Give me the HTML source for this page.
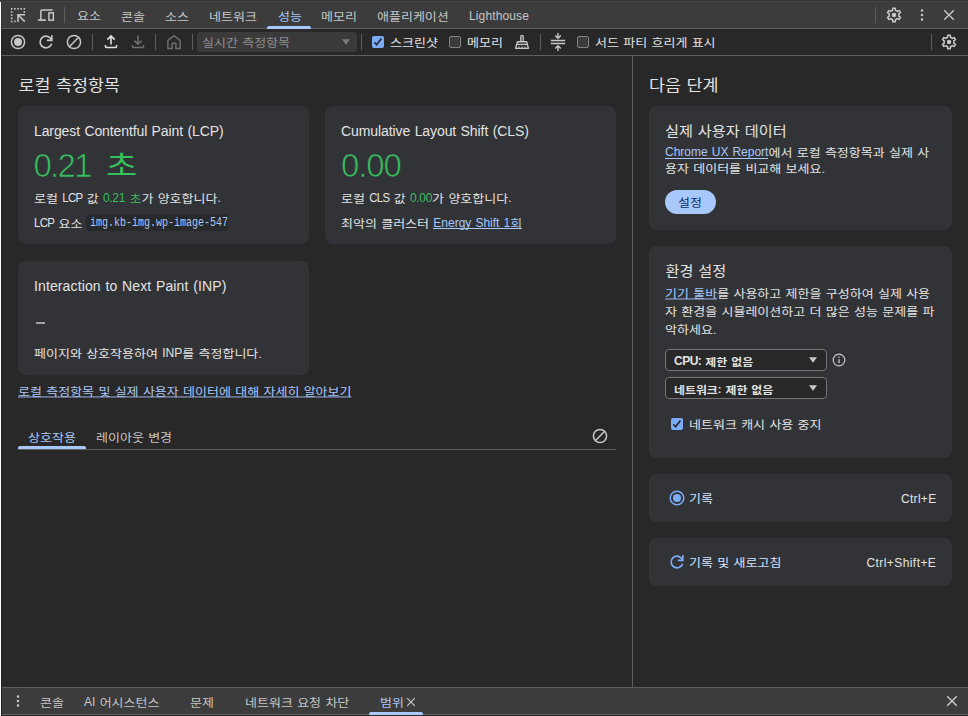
<!DOCTYPE html>
<html lang="ko">
<head>
<meta charset="utf-8">
<title>DevTools</title>
<style>
*{box-sizing:border-box;margin:0;padding:0}
html,body{width:968px;height:716px;overflow:hidden;background:#282828}
body{position:relative;font-family:"Liberation Sans","Noto Sans CJK KR",sans-serif;font-size:13px;color:#e3e3e3;line-height:16px;-webkit-font-smoothing:antialiased}
.abs,.t{position:absolute}
.t{white-space:nowrap;line-height:16px;height:16px;word-spacing:0.7px}
.l{font-size:12px}
.u{font-size:11.5px;letter-spacing:-0.75px}
.n{font-size:12px;letter-spacing:-0.3px}
.sub{color:#c7c7c7}
.pri{color:#a8c7fa}
.grn{color:#37be5f}
.dim{color:#8f8f8f}
a{color:#a8c7fa;text-decoration:underline;text-underline-offset:1px}
.k{transform:translateY(0.6px) scaleY(0.89);transform-origin:0 12.2px}
.kh{transform:scaleY(0.9);transform-origin:0 17px}
.kt{transform:scaleY(0.9);transform-origin:0 14.3px}
.k .l,.k .u,.k .n,.k .b{display:inline-block;transform:translateY(-0.68px) scaleY(1.1236);transform-origin:0 12.2px}
.k .u{transform:translateY(-0.68px) scaleY(1.2)}
a.x{text-decoration:none}
.hline{position:absolute;height:1px;background:#5e5e5e}
.vline{position:absolute;width:1px;background:#5e5e5e}
.card{position:absolute;background:#323337;border-radius:8px}
svg{position:absolute;overflow:visible}
.cb{position:absolute;width:12px;height:12px;border-radius:2px}
.cb.off{border:1px solid #858585;background:#3b3b3b}
.cb.on{background:#7cacf8}
.sel{position:absolute;border:1px solid #757575;border-radius:4px;background:#282828}
</style>
</head>
<body>
<!-- top edge + tab bar -->
<div class="abs" style="left:0;top:0;width:968px;height:1px;background:#343434"></div>
<div class="abs" style="left:0;top:1px;width:968px;height:1px;background:#464646"></div>
<div class="abs" id="tabbar" style="left:0;top:2px;width:968px;height:26px;background:#3c3c3c"></div>
<div class="hline" style="left:0;top:28px;width:968px"></div>
<div class="hline" style="left:0;top:55px;width:968px"></div>
<!-- left white edge -->
<div class="abs" style="left:0;top:2px;width:1px;height:714px;background:#fff"></div>
<div class="abs" style="left:1px;top:2px;width:1px;height:714px;background:rgba(0,0,0,0.14);z-index:5"></div>

<!-- tab labels -->
<div class="t k sub" id="tab1" style="left:77px;top:7.4px">요소</div>
<div class="t k sub" id="tab2" style="left:121px;top:8px">콘솔</div>
<div class="t k sub" id="tab3" style="left:165px;top:8px">소스</div>
<div class="t k sub" id="tab4" style="left:209px;top:8px">네트워크</div>
<div class="t k pri" id="tab5" style="left:278px;top:8px">성능</div>
<div class="t k sub" id="tab6" style="left:321px;top:8px">메모리</div>
<div class="t k sub" id="tab7" style="left:377px;top:8px">애플리케이션</div>
<div class="t sub l" id="tab8" style="left:469px;top:8px;letter-spacing:0.13px">Lighthouse</div>
<div class="abs" style="left:267px;top:26px;width:44px;height:3px;background:#a8c7fa;border-radius:2px 2px 0 0"></div>
<div class="vline" style="left:64px;top:7px;height:16px"></div>
<div class="vline" style="left:875px;top:7px;height:16px"></div>

<!-- perf toolbar -->
<div class="vline" style="left:92px;top:34px;height:16px"></div>
<div class="vline" style="left:155px;top:34px;height:16px"></div>
<div class="vline" style="left:192px;top:34px;height:16px"></div>
<div class="vline" style="left:361px;top:34px;height:16px"></div>
<div class="vline" style="left:540px;top:34px;height:16px"></div>
<div class="vline" style="left:931px;top:34px;height:16px"></div>
<div class="abs" style="left:197px;top:32px;width:160px;height:20px;background:#3a3a3a;border-radius:4px"></div>
<div class="t k dim" id="selt" style="left:202px;top:34px">실시간 측정항목</div>
<div class="t k" id="cb1t" style="left:390px;top:34px">스크린샷</div>
<div class="cb off" style="left:449px;top:36px"></div>
<div class="t k" id="cb2t" style="left:467px;top:34px">메모리</div>
<div class="cb off" style="left:577px;top:36px"></div>
<div class="t k" id="cb3t" style="left:595px;top:34px">서드 파티 흐리게 표시</div>

<!-- main dividers -->
<div class="vline" style="left:632px;top:56px;height:631px"></div>

<!-- left column -->
<div class="t kh" id="h1" style="left:18.5px;top:74px;font-size:17.4px;line-height:22px;height:22px">로컬 측정항목</div>
<div class="card" style="left:18px;top:106px;width:290.5px;height:138px"></div>
<div class="card" style="left:325px;top:106px;width:291px;height:138px"></div>
<div class="card" style="left:18px;top:261px;width:290.5px;height:114px"></div>

<!-- right column -->
<div class="t kh" id="h2" style="left:649px;top:74px;font-size:17.4px;line-height:22px;height:22px">다음 단계</div>
<div class="card" style="left:649px;top:106px;width:303px;height:124px"></div>
<div class="card" style="left:649px;top:246px;width:303px;height:212px"></div>
<div class="card" style="left:649px;top:474px;width:303px;height:48px"></div>
<div class="card" style="left:649px;top:538px;width:303px;height:48px"></div>


<!-- drawer -->
<div class="hline" style="left:2px;top:687px;width:966px"></div>
<div class="abs" style="left:2px;top:688px;width:966px;height:26px;background:#3c3c3c"></div>
<div class="hline" style="left:2px;top:714px;width:966px"></div>

<!-- left column text -->
<div class="t" id="lcp_t" style="left:34px;top:123px;font-size:14px;letter-spacing:-0.11px">Largest Contentful Paint (LCP)</div>
<div class="t grn" id="lcp_v" style="left:33.5px;top:146.5px;font-size:33px;line-height:38px;height:38px;letter-spacing:-1.75px;-webkit-text-stroke:0.7px #323337"><span id="lcp_vn">0.21</span></div>
<div class="t grn" id="lcp_vk" style="left:106px;top:145px;font-size:34px;line-height:38px;height:38px;transform:scaleY(0.82);transform-origin:0 31px">초</div>
<div class="t k" id="lcp_d" style="left:34px;top:190px">로컬 <span class="u">LCP</span> 값 <span class="grn"><span class="n">0.21</span> 초</span>가 양호합니다<span class="u">.</span></div>
<div class="t k" id="lcp_e" style="left:34px;top:215px"><span class="u">LCP</span> 요소</div>
<div class="abs" style="left:86.3px;top:214.4px;width:141.8px;height:16.6px;background:#28292b;border-radius:3px"></div>
<div class="t pri" id="lcp_c" style="left:90px;top:215px;font-family:'Liberation Mono','Noto Sans CJK KR',monospace;font-size:13px;transform:scaleX(0.7692);transform-origin:0 50%">img.kb-img.wp-image-547</div>

<div class="t" id="cls_t" style="left:341px;top:123px;font-size:14px;letter-spacing:-0.09px">Cumulative Layout Shift (CLS)</div>
<div class="t grn" id="cls_v" style="left:341px;top:146.5px;font-size:33px;line-height:38px;height:38px;letter-spacing:-1.1px;-webkit-text-stroke:0.7px #323337">0.00</div>
<div class="t k" id="cls_d" style="left:341px;top:190px">로컬 <span class="u">CLS</span> 값 <span class="grn n">0.00</span>가 양호합니다<span class="u">.</span></div>
<div class="t k" id="cls_e" style="left:341px;top:215px">최악의 클러스터 <a class="x" id="cls_a"><span class="l">Energy Shift 1</span>회</a></div>

<div class="t" id="inp_t" style="left:34px;top:278px;font-size:14px;letter-spacing:0.12px">Interaction to Next Paint (INP)</div>
<div class="abs" style="left:36px;top:322px;width:9px;height:2px;background:#a3a3a3"></div>
<div class="t k" id="inp_d" style="left:34px;top:345px">페이지와 상호작용하여 <span class="l">INP</span>를 측정합니다.</div>
<a class="t k" id="more" style="left:18px;top:383.3px">로컬 측정항목 및 실제 사용자 데이터에 대해 자세히 알아보기</a>

<div class="t k pri" id="st1" style="left:28px;top:429px">상호작용</div>
<div class="t k sub" id="st2" style="left:96px;top:429px">레이아웃 변경</div>
<div class="hline" style="left:18px;top:449px;width:598px"></div>
<div class="abs" style="left:18px;top:446px;width:68px;height:3px;background:#a8c7fa;border-radius:2px 2px 0 0"></div>

<div class="abs" style="left:433px;top:228px;width:88.5px;height:1px;background:#a8c7fa"></div>
<div class="abs" style="left:665px;top:158px;width:103px;height:1px;background:#a8c7fa"></div>
<!-- right column text -->
<div class="t kt" id="r1_t" style="left:665px;top:122px;font-size:15.2px;line-height:18px;height:18px">실제 사용자 데이터</div>
<div class="t k" id="r1_l1" style="left:665px;top:143.8px"><a class="x" id="crux"><span class="l">Chrome UX Report</span></a>에서 로컬 측정항목과 실제 사</div>
<div class="t k" id="r1_l2" style="left:665px;top:159.8px">용자 데이터를 비교해 보세요.</div>
<div class="abs" style="left:665px;top:190px;width:50.5px;height:24px;border-radius:12px;background:#a8c7fa"></div>
<div class="t k" id="r1_b" style="left:678px;top:194px;color:#062e6f">설정</div>

<div class="t kt" id="r2_t" style="left:665.5px;top:262px;font-size:15.2px;line-height:18px;height:18px">환경 설정</div>
<div class="t k" id="r2_l1" style="left:665px;top:285.4px"><a>기기 툴바</a>를 사용하고 제한을 구성하여 실제 사용</div>
<div class="t k" id="r2_l2" style="left:665px;top:303px">자 환경을 시뮬레이션하고 더 많은 성능 문제를 파</div>
<div class="t k" id="r2_l3" style="left:665px;top:320.6px">악하세요.</div>
<div class="sel" style="left:665px;top:349px;width:162px;height:22px"></div>
<div class="sel" style="left:665px;top:377px;width:162px;height:22px"></div>
<div class="t k" id="r2_s1" style="left:674px;top:352.8px;font-weight:700;font-size:11.9px"><span class="b" style="font-size:12px;letter-spacing:-0.5px">CPU:</span> 제한 없음</div>
<div class="t k" id="r2_s2" style="left:674px;top:380.8px;font-weight:700;font-size:11.9px">네트워크<span class="b" style="font-size:11px">:</span> 제한 없음</div>
<div class="t k" id="r2_c" style="left:689px;top:416px">네트워크 캐시 사용 중지</div>

<div class="t k" id="r3_t" style="left:689px;top:490px;color:#d3e3fd">기록</div>
<div class="t l" id="r3_k" style="left:901px;top:491px;letter-spacing:0.3px">Ctrl+E</div>
<div class="t k" id="r4_t" style="left:689px;top:554px;color:#d3e3fd">기록 및 새로고침</div>
<div class="t l" id="r4_k" style="left:866.5px;top:555px;letter-spacing:0.42px">Ctrl+Shift+E</div>

<!-- drawer tabs -->
<div class="t k sub" id="d1" style="left:40px;top:694px">콘솔</div>
<div class="t k sub" id="d2" style="left:84px;top:694px"><span class="l">AI</span> 어시스턴스</div>
<div class="t k sub" id="d3" style="left:190px;top:694px">문제</div>
<div class="t k sub" id="d4" style="left:245px;top:694px">네트워크 요청 차단</div>
<div class="t k pri" id="d5" style="left:380px;top:694px">범위</div>
<div class="abs" style="left:369px;top:712px;width:54px;height:3px;background:#a8c7fa;border-radius:2px 2px 0 0"></div>

<!-- icons -->
<svg style="left:0;top:0" width="60" height="30" viewBox="0 0 60 30"><rect x="10.90" y="8.00" width="1.6" height="1.6" fill="#c7c7c7"/><rect x="14.05" y="8.00" width="1.6" height="1.6" fill="#c7c7c7"/><rect x="10.90" y="11.15" width="1.6" height="1.6" fill="#c7c7c7"/><rect x="17.20" y="8.00" width="1.6" height="1.6" fill="#c7c7c7"/><rect x="10.90" y="14.30" width="1.6" height="1.6" fill="#c7c7c7"/><rect x="20.35" y="8.00" width="1.6" height="1.6" fill="#c7c7c7"/><rect x="10.90" y="17.45" width="1.6" height="1.6" fill="#c7c7c7"/><rect x="23.50" y="8.00" width="1.6" height="1.6" fill="#c7c7c7"/><rect x="10.90" y="20.60" width="1.6" height="1.6" fill="#c7c7c7"/><rect x="23.50" y="11.15" width="1.6" height="1.6" fill="#c7c7c7"/><rect x="14.05" y="20.60" width="1.6" height="1.6" fill="#c7c7c7"/><path d="M25.1 14.8 H18 V21.9 M18.4 15.2 L24.8 21.6" fill="none" stroke="#c7c7c7" stroke-width="1.5"/><path d="M52.8 9.95 H42.2 Q40.85 9.95 40.85 11.3 V19.4" fill="none" stroke="#c7c7c7" stroke-width="1.5"/><path d="M38.1 20.1 H45.9" fill="none" stroke="#c7c7c7" stroke-width="1.7"/><rect x="48.95" y="12.85" width="4.4" height="7.3" fill="none" stroke="#c7c7c7" stroke-width="1.5"/></svg>
<svg style="left:885.0px;top:6.0px" width="18" height="18" viewBox="0 0 24 24"><path fill="#c7c7c7" d="M19.43 12.98c.04-.32.07-.64.07-.98 0-.34-.03-.66-.07-.98l2.11-1.65c.19-.15.24-.42.12-.64l-2-3.46c-.09-.16-.26-.25-.44-.25-.06 0-.12.01-.17.03l-2.49 1c-.52-.4-1.08-.73-1.69-.98l-.38-2.65C14.46 2.18 14.25 2 14 2h-4c-.25 0-.46.18-.49.42l-.38 2.65c-.61.25-1.17.59-1.69.98l-2.49-1c-.06-.02-.12-.03-.18-.03-.17 0-.34.09-.43.25l-2 3.46c-.13.22-.07.49.12.64l2.11 1.65c-.04.32-.07.65-.07.98 0 .33.03.66.07.98l-2.11 1.65c-.19.15-.24.42-.12.64l2 3.46c.09.16.26.25.44.25.06 0 .12-.01.17-.03l2.49-1c.52.4 1.08.73 1.69.98l.38 2.65c.03.24.24.42.49.42h4c.25 0 .46-.18.49-.42l.38-2.65c.61-.25 1.17-.59 1.69-.98l2.49 1c.06.02.12.03.18.03.17 0 .34-.09.43-.25l2-3.46c.12-.22.07-.49-.12-.64l-2.11-1.65zm-1.98-1.71c.04.31.05.52.05.73 0 .21-.02.43-.05.73l-.14 1.13.89.7 1.08.84-.7 1.21-1.27-.51-1.04-.42-.9.68c-.43.32-.84.56-1.25.73l-1.06.43-.16 1.13-.2 1.35h-1.4l-.19-1.35-.16-1.13-1.06-.43c-.43-.18-.83-.41-1.23-.71l-.91-.7-1.06.43-1.27.51-.7-1.21 1.08-.84.89-.7-.14-1.13c-.03-.31-.05-.54-.05-.74s.02-.43.05-.73l.14-1.13-.89-.7-1.08-.84.7-1.21 1.27.51 1.04.42.9-.68c.43-.32.84-.56 1.25-.73l1.06-.43.16-1.13.2-1.35h1.39l.19 1.35.16 1.13 1.06.43c.43.18.83.41 1.23.71l.91.7 1.06-.43 1.27-.51.7 1.21-1.07.85-.89.7.14 1.13z"/><circle cx="12" cy="12" r="3" fill="#c7c7c7"/></svg>
<svg style="left:918px;top:5px" width="8" height="20" viewBox="-4 -10 8 20"><circle cy="-4.4" r="1.25" fill="#c7c7c7"/><circle r="1.25" fill="#c7c7c7"/><circle cy="4.4" r="1.25" fill="#c7c7c7"/></svg>
<svg style="left:941px;top:7px" width="16" height="16" viewBox="-8 -8 16 16"><path d="M-4.8 -4.8 L4.8 4.8 M-4.8 4.8 L4.8 -4.8" stroke="#c7c7c7" stroke-width="1.4" fill="none"/></svg>
<svg style="left:8px;top:32px" width="20" height="20" viewBox="-10 -10 20 20"><circle r="6.6" fill="none" stroke="#c7c7c7" stroke-width="1.5"/><circle r="4.0" fill="#c7c7c7"/></svg>
<svg style="left:36.2px;top:32.1px" width="20" height="20" viewBox="0 -960 960 960"><path fill="#c7c7c7" d="M480-160q-134 0-227-93t-93-227q0-134 93-227t227-93q69 0 132 28.500T720-690v-110h80v280H520v-80h168q-32-56-87.500-88T480-720q-100 0-170 70t-70 170q0 100 70 170t170 70q77 0 139-44t87-116h84q-28 106-114 173t-196 67Z"/></svg>
<svg style="left:64px;top:32px" width="20" height="20" viewBox="-10 -10 20 20"><circle r="6.6" fill="none" stroke="#c7c7c7" stroke-width="1.5"/><path d="M-4.66686 4.66686 L4.66686 -4.66686" stroke="#c7c7c7" stroke-width="1.5"/></svg>
<svg style="left:101px;top:32px" width="20" height="20" viewBox="-10 -10 20 20"><path d="M0 2.6 V-5.6 M-3.6 -2.4 L0 -6 L3.6 -2.4" fill="none" stroke="#e3e3e3" stroke-width="1.6"/><path d="M-5.6 3 V4.2 Q-5.6 5.4 -4.4 5.4 H4.4 Q5.6 5.4 5.6 4.2 V3" fill="none" stroke="#e3e3e3" stroke-width="1.5"/></svg>
<svg style="left:128px;top:32px" width="20" height="20" viewBox="-10 -10 20 20"><path d="M0 -6.4 V1.8 M-3.6 -1.4 L0 2.2 L3.6 -1.4" fill="none" stroke="#6e6e6e" stroke-width="1.6"/><path d="M-5.6 3 V4.2 Q-5.6 5.4 -4.4 5.4 H4.4 Q5.6 5.4 5.6 4.2 V3" fill="none" stroke="#6e6e6e" stroke-width="1.5"/></svg>
<svg style="left:164px;top:32px" width="20" height="20" viewBox="-10 -10 20 20"><path d="M-6.1 6.5 V-1.6 L0 -6.3 L6.1 -1.6 V6.5 H1.9 V1.2 H-1.9 V6.5 Z" fill="none" stroke="#6e6e6e" stroke-width="1.5" stroke-linejoin="miter"/></svg>
<svg style="left:340px;top:36.3px" width="12" height="12" viewBox="-6 -6 12 12"><path d="M-4.0 -2.75 H4.0 L0 2.75 Z" fill="#7a7a7a"/></svg>
<svg style="left:372px;top:36px" width="12" height="12" viewBox="0 0 12 12"><rect width="12" height="12" rx="2" fill="#7cacf8"/><path d="M2.3 6.3 L4.6 8.8 L9.5 2.6" fill="none" stroke="#262626" stroke-width="1.6"/></svg>
<svg style="left:512px;top:32px" width="20" height="20" viewBox="-10 -10 20 20"><path d="M-1.2 -0.4 V-5.4 Q-1.2 -6.6 0 -6.6 Q1.2 -6.6 1.2 -5.4 V-0.4" fill="none" stroke="#c7c7c7" stroke-width="1.4"/><path d="M-4.6 -0.2 H4.6 L6.4 6.4 H-6.4 Z" fill="none" stroke="#c7c7c7" stroke-width="1.4" stroke-linejoin="round"/><path d="M-5.2 2.4 H5.2" stroke="#c7c7c7" stroke-width="1.3"/><path d="M-3 4.6 V6.4 M0 4.6 V6.4 M3 4.6 V6.4" stroke="#c7c7c7" stroke-width="1.2"/></svg>
<svg style="left:548px;top:30.700000000000003px" width="20" height="22" viewBox="-10 -11 20 22"><path d="M-7.2 -1.5 H7.2 M-7.2 1.5 H7.2" stroke="#c7c7c7" stroke-width="1.4"/><path d="M0 -9 V-4.2 M-2.8 -6.6 L0 -3.8 L2.8 -6.6" fill="none" stroke="#c7c7c7" stroke-width="1.4"/><path d="M0 9 V4.2 M-2.8 6.6 L0 3.8 L2.8 6.6" fill="none" stroke="#c7c7c7" stroke-width="1.4"/></svg>
<svg style="left:940.0px;top:33.0px" width="18" height="18" viewBox="0 0 24 24"><path fill="#c7c7c7" d="M19.43 12.98c.04-.32.07-.64.07-.98 0-.34-.03-.66-.07-.98l2.11-1.65c.19-.15.24-.42.12-.64l-2-3.46c-.09-.16-.26-.25-.44-.25-.06 0-.12.01-.17.03l-2.49 1c-.52-.4-1.08-.73-1.69-.98l-.38-2.65C14.46 2.18 14.25 2 14 2h-4c-.25 0-.46.18-.49.42l-.38 2.65c-.61.25-1.17.59-1.69.98l-2.49-1c-.06-.02-.12-.03-.18-.03-.17 0-.34.09-.43.25l-2 3.46c-.13.22-.07.49.12.64l2.11 1.65c-.04.32-.07.65-.07.98 0 .33.03.66.07.98l-2.11 1.65c-.19.15-.24.42-.12.64l2 3.46c.09.16.26.25.44.25.06 0 .12-.01.17-.03l2.49-1c.52.4 1.08.73 1.69.98l.38 2.65c.03.24.24.42.49.42h4c.25 0 .46-.18.49-.42l.38-2.65c.61-.25 1.17-.59 1.69-.98l2.49 1c.06.02.12.03.18.03.17 0 .34-.09.43-.25l2-3.46c.12-.22.07-.49-.12-.64l-2.11-1.65zm-1.98-1.71c.04.31.05.52.05.73 0 .21-.02.43-.05.73l-.14 1.13.89.7 1.08.84-.7 1.21-1.27-.51-1.04-.42-.9.68c-.43.32-.84.56-1.25.73l-1.06.43-.16 1.13-.2 1.35h-1.4l-.19-1.35-.16-1.13-1.06-.43c-.43-.18-.83-.41-1.23-.71l-.91-.7-1.06.43-1.27.51-.7-1.21 1.08-.84.89-.7-.14-1.13c-.03-.31-.05-.54-.05-.74s.02-.43.05-.73l.14-1.13-.89-.7-1.08-.84.7-1.21 1.27.51 1.04.42.9-.68c.43-.32.84-.56 1.25-.73l1.06-.43.16-1.13.2-1.35h1.39l.19 1.35.16 1.13 1.06.43c.43.18.83.41 1.23.71l.91.7 1.06-.43 1.27-.51.7 1.21-1.07.85-.89.7.14 1.13z"/><circle cx="12" cy="12" r="3" fill="#c7c7c7"/></svg>
<svg style="left:590px;top:426px" width="20" height="20" viewBox="-10 -10 20 20"><circle r="6.6" fill="none" stroke="#c7c7c7" stroke-width="1.5"/><path d="M-4.66686 4.66686 L4.66686 -4.66686" stroke="#c7c7c7" stroke-width="1.5"/></svg>
<svg style="left:831px;top:352.2px" width="16" height="16" viewBox="-8 -8 16 16"><circle r="5.8" fill="none" stroke="#c7c7c7" stroke-width="1.2"/><path d="M0 -0.8 V3.2" stroke="#c7c7c7" stroke-width="1.3"/><circle cy="-2.7" r="0.8" fill="#c7c7c7"/></svg>
<svg style="left:807px;top:353.7px" width="12" height="12" viewBox="-6 -6 12 12"><path d="M-4.0 -2.75 H4.0 L0 2.75 Z" fill="#c7c7c7"/></svg>
<svg style="left:807px;top:381.6px" width="12" height="12" viewBox="-6 -6 12 12"><path d="M-4.0 -2.75 H4.0 L0 2.75 Z" fill="#c7c7c7"/></svg>
<svg style="left:671px;top:418px" width="12" height="12" viewBox="0 0 12 12"><rect width="12" height="12" rx="2" fill="#7cacf8"/><path d="M2.3 6.3 L4.6 8.8 L9.5 2.6" fill="none" stroke="#262626" stroke-width="1.6"/></svg>
<svg style="left:667px;top:487.7px" width="20" height="20" viewBox="-10 -10 20 20"><circle r="6.8" fill="none" stroke="#7cacf8" stroke-width="1.5"/><circle r="4.0" fill="#7cacf8"/></svg>
<svg style="left:667px;top:552px" width="20" height="20" viewBox="0 -960 960 960"><path fill="#7cacf8" d="M480-160q-134 0-227-93t-93-227q0-134 93-227t227-93q69 0 132 28.500T720-690v-110h80v280H520v-80h168q-32-56-87.500-88T480-720q-100 0-170 70t-70 170q0 100 70 170t170 70q77 0 139-44t87-116h84q-28 106-114 173t-196 67Z"/></svg>
<svg style="left:14px;top:691px" width="8" height="20" viewBox="-4 -10 8 20"><circle cy="-4.4" r="1.25" fill="#c7c7c7"/><circle r="1.25" fill="#c7c7c7"/><circle cy="4.4" r="1.25" fill="#c7c7c7"/></svg>
<svg style="left:944px;top:693px" width="16" height="16" viewBox="-8 -8 16 16"><path d="M-4.8 -4.8 L4.8 4.8 M-4.8 4.8 L4.8 -4.8" stroke="#c7c7c7" stroke-width="1.5" fill="none"/></svg>
<svg style="left:403.2px;top:694.2px" width="16" height="16" viewBox="-8 -8 16 16"><path d="M-3.8 -3.8 L3.8 3.8 M-3.8 3.8 L3.8 -3.8" stroke="#c7c7c7" stroke-width="1.2" fill="none"/></svg>
</body>
</html>
